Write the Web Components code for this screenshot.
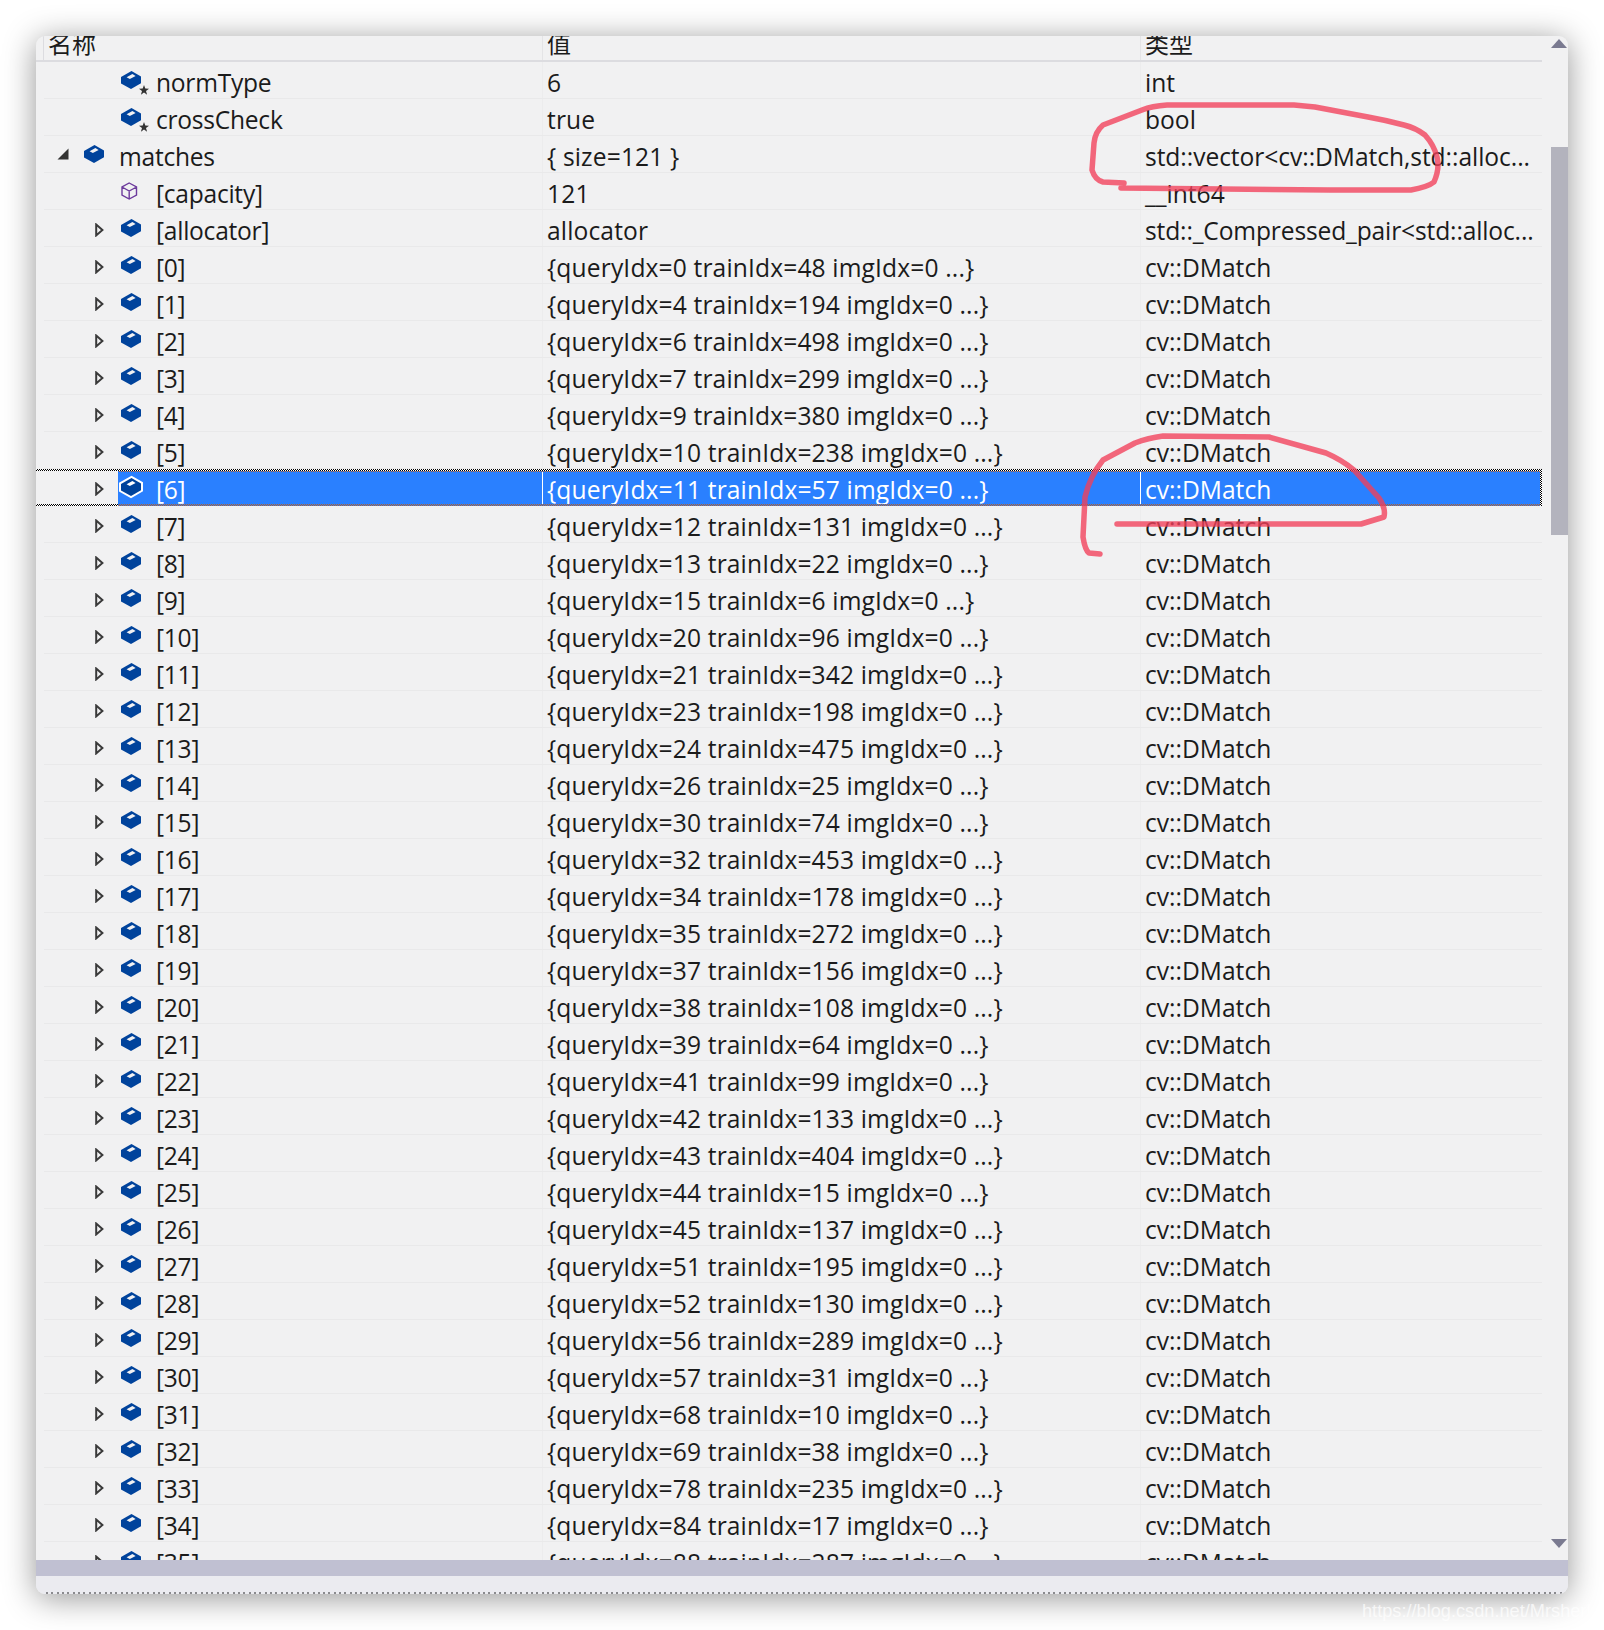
<!doctype html>
<html lang="zh"><head><meta charset="utf-8"><title>Watch</title>
<style>
html,body{margin:0;padding:0;background:#fff}
body{width:1604px;height:1630px;overflow:hidden;font-family:"Open Sans","Noto Sans CJK SC",sans-serif;color:#1b1b1b}
</style></head><body>
<watch-window></watch-window>
<script>
const css=(s)=>`<style>${s}</style>`;
class TreeIcon extends HTMLElement{
  connectedCallback(){
    const k=this.getAttribute('kind')||'field';
    const sel=this.hasAttribute('selected');
    const cube=`<path d="M10.5 0 L20 5.5 V12.2 L10 18 L0 12.4 V6 Z" fill="#00439c" ${sel?'stroke="#fff" stroke-width="4" stroke-linejoin="miter" paint-order="stroke"':''}/><path d="M5.6 6.2 L11.4 3.1 L14.6 5 L8.8 8.1 Z" fill="${sel?'#fff':'#f1f1f2'}"/>`;
    let svg;
    if(k==='prop') svg=`<svg width="17" height="18" viewBox="0 0 17 18"><path d="M8.2 1 L15.5 5 V13 L8.2 17 L1 13 V5 Z M1 5 L8.2 9 L15.5 5 M8.2 9 V17" fill="none" stroke="#6c3a9c" stroke-width="1.4"/></svg>`;
    else svg=`<svg width="20" height="18" viewBox="0 0 20 18" style="overflow:visible">${cube}</svg>`;
    const star=k==='static'?`<svg class="star" width="10" height="10" viewBox="0 0 10 10"><path d="M5 0 L6.3 3.5 L10 3.7 L7 6 L8.1 9.8 L5 7.6 L1.9 9.8 L3 6 L0 3.7 L3.7 3.5 Z" fill="#333"/></svg>`:'';
    this.attachShadow({mode:'open'}).innerHTML=css(`:host{display:block;position:relative;width:20px;height:18px;line-height:0}
      svg{display:block}.star{position:absolute;left:18px;top:14px}`)+svg+star;
  }
}
customElements.define('tree-icon',TreeIcon);

class TreeArrow extends HTMLElement{
  connectedCallback(){
    const o=this.getAttribute('state');
    const g=o==='open'
      ?`<path d="M11.5 0.5 V11.5 H0.5 Z" fill="#333"/>`
      :`<path d="M1.2 1.6 L7.4 7 L1.2 12.4 Z" fill="none" stroke="#3a3a3a" stroke-width="2"/>`;
    this.attachShadow({mode:'open'}).innerHTML=css(`:host{display:block;width:12px;height:14px;line-height:0}`)+`<svg width="12" height="14" viewBox="0 0 12 14">${g}</svg>`;
  }
}
customElements.define('tree-arrow',TreeArrow);

class WatchRow extends HTMLElement{
  connectedCallback(){
    const a=n=>this.getAttribute(n)||'';
    const lvl=+a('level');
    const sel=this.hasAttribute('selected');
    const arrow=a('arrow');
    const left=`<span class="ar ${lvl===0?'a0':'a1'}">${arrow?`<tree-arrow state="${arrow}"></tree-arrow>`:''}</span>`;
    this.attachShadow({mode:'open'}).innerHTML=css(`
      :host{display:grid;grid-template-columns:506px 598px 402px;width:1506px;height:37px;position:relative;box-sizing:border-box;font-size:var(--fs);white-space:nowrap}
      .cell{display:flex;align-items:center;height:36px;overflow:hidden;box-sizing:border-box}
      .c1{padding-left:8px}
      .c2,.c3{padding-left:4px;border-left:1px solid #ececed}
      .line{position:absolute;left:8px;right:0;bottom:0;height:1px;background:#e9e9ea}
      .ar{flex:none;display:block;height:14px}
      .a0{margin-left:13px;width:27px;margin-top:2px}
      .a1{margin-left:51px;width:26px;margin-top:4px}
      .ico{flex:none;margin-right:15px}
      .t{position:relative;top:var(--dy)}
      .c1 .t{letter-spacing:-.26px}
      .c2 .t{letter-spacing:.14px}
      .c3 .t{letter-spacing:${a('ts')||0}px}
      .blue{display:flex;align-items:center;flex:1;height:36px;margin-left:-3px;padding-left:3px}
      :host([selected]){color:#fff}
      :host([selected]) .c2,:host([selected]) .c3{background:#2a80ff;border-left-color:#fff}
      :host([selected]) .blue{background:#2a80ff}
      :host([selected]) .line{display:none}
      .edge{position:absolute;--ck:conic-gradient(#000 25%,#fff 0 50%,#000 0 75%,#fff 0) 0 0/2px 2px;--or:conic-gradient(#c0601c 25%,#2a80ff 0 50%,#c0601c 0 75%,#2a80ff 0) 0 0/2px 2px}
      .top{left:0;right:0;top:0;height:2px;background:var(--ck)}
      .top2{left:82px;right:2px;top:2px;height:1px;background:var(--or)}
      .botl{left:0;width:82px;bottom:0;height:2px;background:var(--ck)}
      .botr{left:82px;right:0;bottom:0;height:2px;background:var(--or)}
      .right{right:0;top:0;bottom:0;width:2px;background:var(--ck)}
    `)+`<div class="cell c1">${left}
        ${sel?`<span class="blue"><tree-icon class="ico" kind="${a('kind')}" selected></tree-icon><span class="t">${a('name')}</span></span>`
             :`<tree-icon class="ico" kind="${a('kind')}"></tree-icon><span class="t">${a('name')}</span>`}
      </div>
      <div class="cell c2"><span class="t">${a('val')}</span></div>
      <div class="cell c3"><span class="t">${a('type')}</span></div>
      <div class="line"></div>
      ${sel?'<div class="edge top"></div><div class="edge top2"></div><div class="edge botl"></div><div class="edge botr"></div><div class="edge right"></div>':''}`;
  }
}
customElements.define('watch-row',WatchRow);

class WatchHeader extends HTMLElement{
  connectedCallback(){
    this.attachShadow({mode:'open'}).innerHTML=css(`
      :host{display:grid;grid-template-columns:506px 598px 402px;width:1506px;height:26px;box-sizing:border-box;border-bottom:2px solid #dcdce0;overflow:hidden;font-size:24px;line-height:24px;align-items:end}
      div{height:24px;box-sizing:border-box;overflow:visible;position:relative}
      span{position:relative;top:-4px;display:block}
      .a{padding-left:12px}.a::before{content:"";position:absolute;left:7px;top:0;bottom:0;width:1px;background:#dcdce0}
      .b,.c{padding-left:4px;border-left:1px solid #e4e4e6}
    `)+`<div class="a"><span>名称</span></div><div class="b"><span>值</span></div><div class="c"><span>类型</span></div>`;
  }
}
customElements.define('watch-header',WatchHeader);

class VScrollbar extends HTMLElement{
  connectedCallback(){
    this.attachShadow({mode:'open'}).innerHTML=css(`
      :host{display:flex;flex-direction:column;width:17px;flex:none;align-items:stretch}
      .up,.down{width:0;height:0;border-left:8.5px solid transparent;border-right:8.5px solid transparent}
      .up{border-bottom:9px solid #7a7a90;margin-top:3px}
      .down{border-top:9px solid #7a7a90;margin-bottom:12px}
      .track{flex:1;padding-top:99px}
      .thumb{height:388px;background:#b3b3bd}
    `)+`<div class="up"></div><div class="track"><div class="thumb"></div></div><div class="down"></div>`;
  }
}
customElements.define('v-scrollbar',VScrollbar);

class InkOverlay extends HTMLElement{
  connectedCallback(){
    this.attachShadow({mode:'open'}).innerHTML=css(`:host{position:absolute;left:0;top:0;width:1604px;height:1630px;pointer-events:none;display:block}
      svg{display:block}path{fill:none;stroke:#f23f5a;stroke-opacity:.78;stroke-width:5.5;stroke-linecap:round;stroke-linejoin:round}`)+
    `<svg width="1604" height="1630" viewBox="0 0 1604 1630">
      <path d="M1121 188 L1330 190 L1411 190 Q1428 187 1434 182 Q1440 168 1437 157 Q1434 145 1425 135 Q1416 128 1404 125 Q1385 120 1368 117 L1315 107 L1294 105 L1167 105 Q1152 106 1142 110 L1103 125 Q1095 132 1094 143 L1092 170 Q1095 180 1103 182 L1124 183"/>
      <path d="M1117 524 L1361 524 L1384 517 Q1386 508 1379 498 L1354 470 Q1342 460 1326 453 L1269 437 L1163 436 Q1148 438 1135 443 L1103 460 Q1090 476 1085 497 L1083 537 Q1085 550 1089 553 L1100 554"/>
    </svg>`;
  }
}
customElements.define('ink-overlay',InkOverlay);

class WatchWindow extends HTMLElement{
  connectedCallback(){
    const d=[[0,48],[4,194],[6,498],[7,299],[9,380],[10,238],[11,57],[12,131],[13,22],[15,6],[20,96],[21,342],[23,198],[24,475],[26,25],[30,74],[32,453],[34,178],[35,272],[37,156],[38,108],[39,64],[41,99],[42,133],[43,404],[44,15],[45,137],[51,195],[52,130],[56,289],[57,31],[68,10],[69,38],[78,235],[84,17],[88,287]];
    const esc=s=>s.replace(/&/g,'&amp;').replace(/</g,'&amp;lt;').replace(/"/g,'&quot;');
    const row=(o)=>`<watch-row ${Object.entries(o).map(([k,v])=>v===true?k:`${k}="${esc(String(v))}"`).join(' ')}></watch-row>`;
    let rows=row({level:1,kind:'static',name:'normType',val:'6',type:'int'})
      +row({level:1,kind:'static',name:'crossCheck',val:'true',type:'bool'})
      +row({level:0,kind:'field',arrow:'open',name:'matches',val:'{ size=121 }',ts:-.06,type:'std::vector<cv::DMatch,std::alloc...'})
      +row({level:1,kind:'prop',name:'[capacity]',val:'121',type:'__int64'})
      +row({level:1,kind:'field',arrow:'closed',name:'[allocator]',val:'allocator',ts:-.15,type:'std::_Compressed_pair<std::alloc...'});
    d.forEach(([q,t],i)=>{const o={level:1,kind:'field',arrow:'closed',name:`[${i}]`,val:`{queryIdx=${q} trainIdx=${t} imgIdx=0 ...}`,type:'cv::DMatch'};if(i===6)o.selected=true;rows+=row(o);});
    this.attachShadow({mode:'open'}).innerHTML=css(`
      :host{display:block;--fs:24.6px;--dy:2px}
      .pad{padding:36px 36px 36px 36px}
      .win{width:1532px;height:1558px;background:#f1f1f2;border-radius:9px;box-shadow:0 4px 32px rgba(0,0,0,.42);overflow:hidden;display:flex;flex-direction:column}
      .main{display:flex;height:1524px;flex:none}
      .list{flex:1;overflow:hidden;min-width:0}
      .hbar{height:16px;background:#c0c0d2;flex:none}
      .foot{flex:1;background:#ebebf0;display:flex;flex-direction:column;justify-content:flex-end}
      .dots{height:2px;margin-left:10px;background:repeating-linear-gradient(90deg,#8a8a8e 0 2px,transparent 2px 5.33px)}
      .mark{position:absolute;left:1362px;top:1601px;font:18.2px "Liberation Sans",sans-serif;color:rgba(255,255,255,.72);white-space:nowrap}
    `)+`<div class="pad"><div class="win"><div class="main"><div class="list"><watch-header></watch-header>${rows}</div><v-scrollbar></v-scrollbar></div><div class="hbar"></div><div class="foot"><div class="dots"></div></div></div></div><ink-overlay></ink-overlay><div class="mark">https://blog.csdn.net/Mrsherlock</div>`;
  }
}
customElements.define('watch-window',WatchWindow);
</script>
</body></html>
